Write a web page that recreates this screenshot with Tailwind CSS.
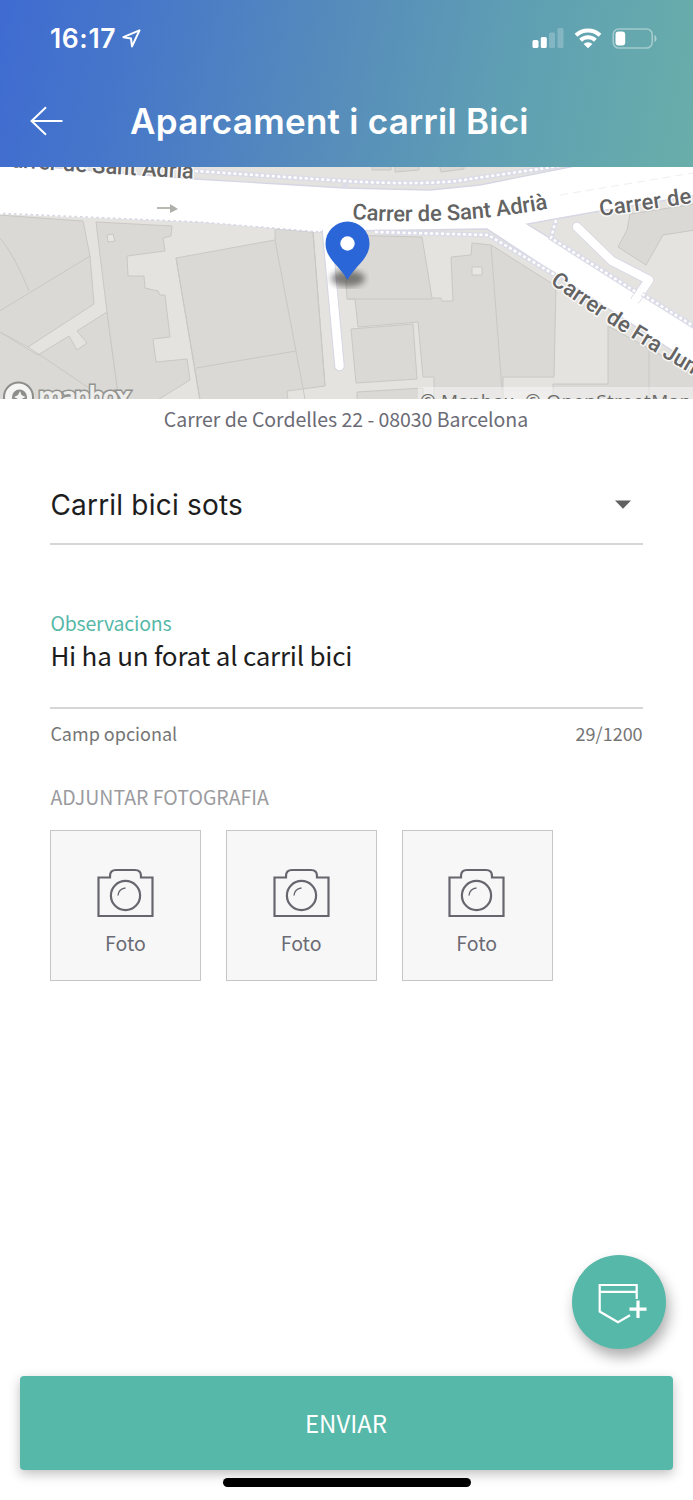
<!DOCTYPE html>
<html lang="ca">

<head>
    <meta charset="UTF-8">
    <meta name="viewport" content="width=device-width, initial-scale=1.0">
    <title>Aparcament i carril Bici</title>
    <script src="https://cdn.jsdelivr.net/npm/@tailwindcss/browser@4"></script>
</head>

<body class="bg-white">
    <div class="relative flex flex-col w-[693px] h-[1500px] overflow-hidden bg-white font-['Noto_Sans_CJK_SC',sans-serif]">

        <!-- Header -->
        <header class="h-[167px] shrink-0 flex flex-col text-white font-['Inter',sans-serif] bg-linear-[102deg,#3f6bd1_0%,#4676ca_18%,#568cbb_48%,#5f9fb3_72%,#69aeaa_100%]">
            <div class="h-[76px] flex items-center justify-between pl-[50px] pr-[36px]">
                <div class="flex items-center gap-[6px]">
                    <span class="pt-px text-[26.5px] font-semibold leading-none tracking-[0.6px]">16:17</span>
                    <svg width="19" height="19" viewBox="0 0 19 19" fill="none" stroke="#fff" stroke-width="2" stroke-linejoin="round">
                        <path d="M17.5 1.3 L1.4 8.2 L9 9.6 L10 17.4 Z" />
                    </svg>
                </div>
                <div class="flex items-center gap-[10px]">
                    <svg width="32" height="20" viewBox="0 0 32 20" fill="#fff">
                        <rect x="0.5" y="12" width="6" height="8" rx="1.6" />
                        <rect x="8.8" y="9" width="6" height="11" rx="1.6" />
                        <rect x="17" y="4.5" width="6" height="15.5" rx="1.6" opacity=".22" />
                        <rect x="25.5" y="0" width="6" height="20" rx="1.6" opacity=".22" />
                    </svg>
                    <svg width="28" height="21" viewBox="0 0 28 21" fill="none" stroke="#fff" stroke-width="4">
                        <path d="M2 7.2 A17.4 17.4 0 0 1 26 7.2" />
                        <path d="M6.6 12.2 A10.6 10.6 0 0 1 21.4 12.2" />
                        <path d="M14 20.2 L9.6 15.9 A6.4 6.4 0 0 1 18.4 15.9 Z" fill="#fff" stroke="none" />
                    </svg>
                    <svg width="45" height="21" viewBox="0 0 45 21" fill="none">
                        <rect x="1.2" y="1" width="39" height="19" rx="5.5" stroke="#fff" stroke-opacity=".4" stroke-width="1.6" />
                        <rect x="3.5" y="3.4" width="9.7" height="14.2" rx="3" fill="#fff" />
                        <path d="M42.5 7 C45.2 8.2 45.2 12.8 42.5 14 Z" fill="#fff" fill-opacity=".45" />
                    </svg>
                </div>
            </div>
            <div class="h-[89px] flex items-center pl-[30px]">
                <svg class="shrink-0" width="34" height="30" viewBox="0 0 34 30" fill="none" stroke="#fff" stroke-width="2">
                    <path d="M16 1.2 L1.6 15 L16 28.8 M1.6 15 H32.5" />
                </svg>
                <h1 class="pl-[66px] pt-px text-[35px] font-semibold leading-none tracking-[0.25px] whitespace-nowrap">Aparcament i carril Bici</h1>
            </div>
        </header>

        <!-- Map -->
        <svg class="shrink-0 block" width="693" height="232" viewBox="0 167 693 232">
            <defs>
                <filter id="blur"><feGaussianBlur stdDeviation="3.2" /></filter>
                <path id="street-top" d="M-3 166 Q70 172 210 179.500" />
                <path id="street-mid" d="M352 219 Q450 227 552 208" />
                <path id="street-right" d="M600 216 Q660 208 705 201" />
                <path id="street-fra" d="M550 283 Q620 334 730 396" />
            </defs>
            <rect y="167" width="693" height="232" fill="#e4e3df" />

            <!-- Buildings -->
            <g fill="#dad9d5" stroke="#c9c8c4" stroke-width="1">
                <path d="M-2 215 L83 221 L90 256 L94 304 L28 347 L-2 331 Z" />
                <path d="M-2 331 L38 355 L69 336 L77 350 L87 343 L77 331 L107 312 L119 401 H-2 Z" />
                <path d="M96 222 L172 226 L171 236 L163 238 L165 251 L127 256 L128 276 L144 276 L145 288 L158 291 L160 295 L165 295 L170 337 L153 339 L156 362 L187 359 L190 380 L156 401 H119 L107 312 Z" />
                <path d="M176 258 L275 240 V229 L313 232 L325 386 L287 391 L288 401 H200 Z" />
                <path d="M343 235 L422 237 L432 298 H441 L442 301 H453 L451 257 L471 255 L472 243 L491 245 L556 286 L554 377 H503 V401 H434 V377 H423 L418 322 L358 327 L355 299 H347 Z" />
                <path d="M351 329 L413 324 L417 379 L356 383 Z" />
                <path d="M357 392 L423 388 V401 H357 Z" />
                <path d="M608 326 L695 374 V401 H553 V384 H608 Z" />
                <path d="M630 214 L627 230 L618 247 L646 265 L663 235 L695 230 V204 Z" />
                <path d="M372 160 V170 H391 V160 M395 160 L395 172 L419 170 V160 M438 160 L441 172 L464 169 V160" />
            </g>
            <g fill="none" stroke="#c9c8c4" stroke-width="1">
                <path d="M-2 312 L90 256 M0 238 Q15 256 29 291 M28 347 L92 390 M176 258 L200 399 M275 240 L305 399 M196 368 L296 351 M313 232 L325 386 M347 299 H432 M491 245 L502 390 M649 346 V399" />
            </g>
            <path d="M107 235 l6 -1 l2 7 l-7 1 Z M472 267 h10 v8 h-10 Z" fill="#e8e7e4" stroke="#c9c8c4" />

            <!-- Streets -->
            <g stroke="#d6d6e4" stroke-width="1.4" fill="#fff">
                <path d="M-4 163 L195 179 L345 188 L430 190 L480 185 L590 163 L697 163 V195 L600 211 L527 224 L697 328 V367 L487 229 L343 231 L320 232 L200 222 L-4 213 Z" />
            </g>
            <g fill="none" stroke-linecap="round" stroke-linejoin="round">
                <path d="M327 232 L339.500 366" stroke="#d6d6e4" stroke-width="10.500" />
                <path d="M327 230 L339.500 366" stroke="#fff" stroke-width="8.500" />
                <path d="M577 227 L612 261 L649 280 L636 299" stroke="#d6d6e4" stroke-width="10" />
                <path d="M577 227 L612 261 L649 280 L636 299" stroke="#fff" stroke-width="8.500" />
            </g>
            <path d="M486 224 L690 358 L690 340 L520 220 Z" fill="#fff" />

            <!-- Footpaths -->
            <g fill="none" stroke="#dcdce8" stroke-width="5">
                <path d="M195 171 L345 181 L345 188 M345 181 Q430 186 470 179 L560 166" />
                <path d="M375 232 L488 235 L560 278" />
                <path d="M556 220 L551 238 L636 292 M642 294 L695 327" />
            </g>
            <g fill="none" stroke="#fff" stroke-width="2.500" stroke-dasharray="3 2.500">
                <path d="M195 171 L345 181 Q430 186 470 179 L560 166" />
                <path d="M0 213 L200 221 L320 231 M375 232 L488 235 L560 278" />
                <path d="M556 220 L551 238 L636 292 M642 294 L695 327" />
            </g>
            <path d="M157 208 H173" stroke="#b9b9b2" stroke-width="2" />
            <path d="M170 204 L178 209 L170 213 Z" fill="#b0b0aa" />
            <path d="M560 195 L693 173" stroke="#efeff3" stroke-dasharray="8 5" />

            <!-- Street names -->
            <g class="font-['Roboto',sans-serif] font-medium" font-size="22" fill="#636363" stroke="#fff" stroke-opacity=".8" stroke-width="3" stroke-linejoin="round" paint-order="stroke">
                <text><textPath href="#street-top" textLength="197">Carrer de Sant Adrià</textPath></text>
                <text><textPath href="#street-mid" textLength="197">Carrer de Sant Adrià</textPath></text>
                <text><textPath href="#street-right" textLength="93">Carrer de</textPath></text>
                <text><textPath href="#street-fra" textLength="170">Carrer de Fra Jun</textPath></text>
            </g>

            <!-- Attribution -->
            <rect x="418" y="387" width="275" height="12" fill="#fff" fill-opacity=".4" />
            <g class="font-['Open_Sans',sans-serif]" fill="#6b6b69" font-size="19">
                <text x="420" y="408" textLength="94">© Mapbox</text>
                <text x="525" y="408" textLength="166">© OpenStreetMap</text>
            </g>
            <circle cx="18.500" cy="397" r="14.500" fill="#f5f5f3" stroke="#8d8d8a" stroke-width="2" />
            <circle cx="19.500" cy="397" r="7.500" fill="#8d8d8a" />
            <path d="M20 391 l1.500 4 l4 2 l-4 2 l-2 4 l-1.500 -4 l-4 -2 l4 -2 Z" fill="#f5f5f3" />
            <text x="38" y="406" textLength="93" class="font-['Open_Sans',sans-serif] font-bold" font-size="26" fill="#ededeb" stroke="#92928f" stroke-width="3" paint-order="stroke">mapbox</text>

            <!-- Pin -->
            <ellipse cx="348" cy="278.500" rx="17" ry="8" fill="#000" fill-opacity=".45" filter="url(#blur)" />
            <path d="M347.500 280 C341 267 325.500 259 325.500 243.500 A22 22 0 0 1 369.500 243.500 C369.500 259 354 267 347.500 280 Z" fill="#2b66d9" />
            <circle cx="347.500" cy="243.500" r="7.200" fill="#fff" />
        </svg>

        <p class="h-[39px] leading-[40px] pr-[1px] text-center text-[19.5px] tracking-[-0.03px] text-[#6b6b75] shrink-0">Carrer de Cordelles 22 - 08030 Barcelona</p>

        <!-- Form -->
        <form class="flex flex-col px-[50.4px] pt-[26px]">
            <div class="h-[81px] flex items-center justify-between border-b-2 border-[#d6d6d6] pr-[11px]">
                <span class="pt-[2px] text-[28px] text-[#1d1d1d] font-['Inter',sans-serif] leading-none tracking-[0.2px]">Carril bici sots</span>
                <svg class="mt-[2px]" width="18" height="9" viewBox="0 0 18 9" fill="#616161"><path d="M1 0.500 H17 L9 8.700 Z" /></svg>
            </div>

            <div class="pt-[63px] border-b-2 border-[#d6d6d6] h-[164px]">
                <label class="block h-[30px] leading-[30px] text-[19.5px] tracking-[-0.2px] text-[#56b8a8]">Observacions</label>
                <div class="h-[33px] leading-[33px] text-[26px] tracking-[-0.23px] text-[#1d1d1d]">Hi ha un forat al carril bici</div>
            </div>
            <div class="flex justify-between h-[47px] leading-[49px] text-[18px] text-[#757575]">
                <span>Camp opcional</span>
                <span>29/1200</span>
            </div>

            <h2 class="pt-[24px] leading-[34px] text-[19.5px] text-[#9b9ba0]">ADJUNTAR FOTOGRAFIA</h2>
            <div class="flex gap-[24.7px] pt-[15.5px]">
                <div class="size-[151px] flex flex-col items-center border border-[#c6c6c8] bg-[#f7f7f7] pt-[37px]">
                    <svg class="shrink-0" width="58" height="50" viewBox="0 0 58 50" fill="none" stroke="#67666f" stroke-width="2.200">
                        <path d="M1.500 9.500 H13 V8 Q13 2 19 2 H38 Q44 2 44 8 V9.500 H55.500 V48 H1.500 Z" />
                        <circle cx="28.500" cy="27.500" r="14.600" />
                        <path d="M21 27.500 A7.700 7.700 0 0 1 28.500 20" stroke-width="1.400" />
                    </svg>
                    <span class="pt-[10px] pr-[1px] leading-[30px] text-[19.5px] text-[#6b6b75]">Foto</span>
                </div>
                <div class="size-[151px] flex flex-col items-center border border-[#c6c6c8] bg-[#f7f7f7] pt-[37px]">
                    <svg class="shrink-0" width="58" height="50" viewBox="0 0 58 50" fill="none" stroke="#67666f" stroke-width="2.200">
                        <path d="M1.500 9.500 H13 V8 Q13 2 19 2 H38 Q44 2 44 8 V9.500 H55.500 V48 H1.500 Z" />
                        <circle cx="28.500" cy="27.500" r="14.600" />
                        <path d="M21 27.500 A7.700 7.700 0 0 1 28.500 20" stroke-width="1.400" />
                    </svg>
                    <span class="pt-[10px] pr-[1px] leading-[30px] text-[19.5px] text-[#6b6b75]">Foto</span>
                </div>
                <div class="size-[151px] flex flex-col items-center border border-[#c6c6c8] bg-[#f7f7f7] pt-[37px]">
                    <svg class="shrink-0" width="58" height="50" viewBox="0 0 58 50" fill="none" stroke="#67666f" stroke-width="2.200">
                        <path d="M1.500 9.500 H13 V8 Q13 2 19 2 H38 Q44 2 44 8 V9.500 H55.500 V48 H1.500 Z" />
                        <circle cx="28.500" cy="27.500" r="14.600" />
                        <path d="M21 27.500 A7.700 7.700 0 0 1 28.500 20" stroke-width="1.400" />
                    </svg>
                    <span class="pt-[10px] pr-[1px] leading-[30px] text-[19.5px] text-[#6b6b75]">Foto</span>
                </div>
            </div>
        </form>

        <!-- Bottom actions -->
        <div class="mt-auto flex flex-col items-center px-[20px] pb-[13px]">
            <button type="button" class="w-full h-[94px] rounded-[4px] bg-[#56b8a8] pr-[1px] text-white text-[24px] leading-[94px] shadow-[0_4px_12px_rgba(0,0,0,0.25)]">ENVIAR</button>
            <div class="mt-[8px] w-[248px] h-[9px] rounded-full bg-black"></div>
        </div>

        <button type="button" class="absolute right-[27px] bottom-[151px] size-[94px] rounded-full bg-[#56b8a8] shadow-[3px_8px_14px_rgba(0,0,0,0.32)]">
            <svg width="94" height="94" viewBox="0 0 94 94" fill="none" stroke="#fff" stroke-width="2.200">
                <path d="M64.700 44 V30 H27.700 V56.500 L46 67.300 L58 60.200 M27.700 36.800 H64.700" />
                <path d="M66 45.500 V63 M57.500 54.200 H74.500" stroke-width="3.200" />
            </svg>
        </button>
    </div>
</body>

</html>
